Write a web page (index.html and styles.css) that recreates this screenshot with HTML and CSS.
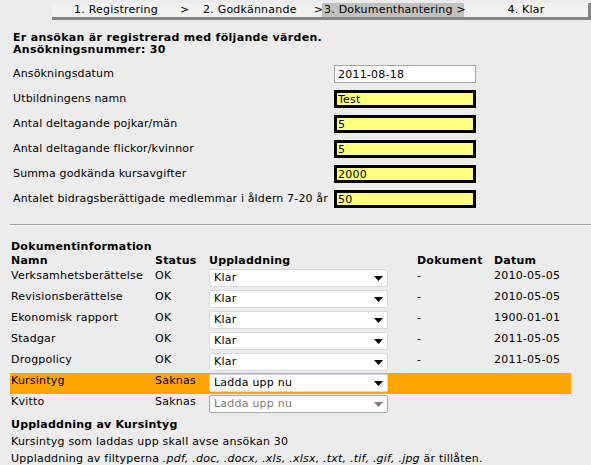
FILE: index.html
```html
<!DOCTYPE html>
<html lang="sv">
<head>
<meta charset="utf-8">
<title>Dokumenthantering</title>
<link rel="stylesheet" href="styles.css">
</head>
<body>
<div class="steps">
  <span class="step s1">1. Registrering</span>
  <span class="step sep1">&gt;</span>
  <span class="step s2">2. Godkännande</span>
  <span class="step sep2">&gt;</span>
  <span class="step s3 active">3. Dokumenthantering &gt;</span>
  <span class="step s4">4. Klar</span>
</div>

<div class="intro">
  <p>Er ansökan är registrerad med följande värden.</p>
  <p>Ansökningsnummer: 30</p>
</div>

<div class="form">
  <span class="lbl">Ansökningsdatum</span><input class="fld plain" value="2011-08-18">
  <span class="lbl">Utbildningens namn</span><input class="fld req" value="Test">
  <span class="lbl">Antal deltagande pojkar/män</span><input class="fld req" value="5">
  <span class="lbl">Antal deltagande flickor/kvinnor</span><input class="fld req" value="5">
  <span class="lbl">Summa godkända kursavgifter</span><input class="fld req" value="2000">
  <span class="lbl">Antalet bidragsberättigade medlemmar i åldern 7-20 år</span><input class="fld req" value="50">
</div>

<div class="rule"></div>

<div class="docs">
  <div class="docs-title">Dokumentinformation</div>
  <table class="doctable">
    <colgroup>
      <col class="c1"><col class="c2"><col class="c3"><col class="c4"><col class="c5">
    </colgroup>
    <thead>
      <tr><th>Namn</th><th>Status</th><th>Uppladdning</th><th>Dokument</th><th>Datum</th></tr>
    </thead>
    <tbody>
      <tr><td>Verksamhetsberättelse</td><td>OK</td><td><div class="sel"><span>Klar</span><svg class="arrow" width="9" height="5" viewBox="0 0 9 5"><path d="M0 0H9L4.5 5Z"/></svg></div></td><td>-</td><td>2010-05-05</td></tr>
      <tr><td>Revisionsberättelse</td><td>OK</td><td><div class="sel"><span>Klar</span><svg class="arrow" width="9" height="5" viewBox="0 0 9 5"><path d="M0 0H9L4.5 5Z"/></svg></div></td><td>-</td><td>2010-05-05</td></tr>
      <tr><td>Ekonomisk rapport</td><td>OK</td><td><div class="sel"><span>Klar</span><svg class="arrow" width="9" height="5" viewBox="0 0 9 5"><path d="M0 0H9L4.5 5Z"/></svg></div></td><td>-</td><td>1900-01-01</td></tr>
      <tr><td>Stadgar</td><td>OK</td><td><div class="sel"><span>Klar</span><svg class="arrow" width="9" height="5" viewBox="0 0 9 5"><path d="M0 0H9L4.5 5Z"/></svg></div></td><td>-</td><td>2011-05-05</td></tr>
      <tr><td>Drogpolicy</td><td>OK</td><td><div class="sel"><span>Klar</span><svg class="arrow" width="9" height="5" viewBox="0 0 9 5"><path d="M0 0H9L4.5 5Z"/></svg></div></td><td>-</td><td>2011-05-05</td></tr>
      <tr class="current"><td>Kursintyg</td><td>Saknas</td><td><div class="sel"><span>Ladda upp nu</span><svg class="arrow" width="9" height="5" viewBox="0 0 9 5"><path d="M0 0H9L4.5 5Z"/></svg></div></td><td></td><td></td></tr>
      <tr><td>Kvitto</td><td>Saknas</td><td><div class="sel disabled"><span>Ladda upp nu</span><svg class="arrow" width="9" height="5" viewBox="0 0 9 5"><path d="M0 0H9L4.5 5Z"/></svg></div></td><td></td><td></td></tr>
    </tbody>
  </table>

  <div class="upload">
    <div class="upload-title">Uppladdning av Kursintyg</div>
    <p>Kursintyg som laddas upp skall avse ansökan 30</p>
    <p>Uppladdning av filtyperna <i>.pdf, .doc, .docx, .xls, .xlsx, .txt, .tif, .gif, .jpg</i> är tillåten.</p>
  </div>
</div>
</body>
</html>
```

FILE: styles.css
```css
html, body {
  margin: 0;
  padding: 0;
}

body {
  background: #ececec;
  font-family: "DejaVu Sans", Verdana, sans-serif;
  font-size: 11px;
  letter-spacing: 0.22px;
  color: #000;
}

/* progress steps */
.steps {
  display: flex;
  margin: 3px 0 0 52px;
  width: 536px;
  height: 14px;
  line-height: 14px;
  background: #f2f2f2;
  border-right: 3px solid #858585;
  border-bottom: 3px solid #858585;
  white-space: nowrap;
}

.step {
  display: block;
  box-sizing: border-box;
}

.s1 { width: 126px; padding-left: 22px; }
.sep1 { width: 20px; padding-left: 2px; }
.s2 { width: 112px; padding-left: 5px; }
.sep2 { width: 12px; padding-left: 4px; }
.s3 { width: 142px; padding-left: 2px; }
.s4 { flex: 1; text-align: center; }

.active {
  background: #c0c0c0;
}

/* intro */
.intro {
  margin: 12px 0 0 13px;
  font-weight: bold;
  letter-spacing: 0.3px;
}

.intro p {
  margin: 0;
  line-height: 12px;
}

/* form */
.form {
  display: grid;
  grid-template-columns: 317px 142px;
  column-gap: 4px;
  row-gap: 7px;
  align-items: center;
  margin: 9px 0 0 13px;
}

.lbl {
  white-space: nowrap;
  line-height: 14px;
  letter-spacing: 0.15px;
}

.fld {
  box-sizing: border-box;
  width: 142px;
  height: 18px;
  margin: 0;
  font-family: inherit;
  font-size: 11px;
  letter-spacing: inherit;
  color: #000;
  outline: none;
}

.plain {
  background: #fff;
  border: 1px solid #a8a8a8;
  padding: 0 3px;
}

.req {
  background: #ffff80;
  border: 3px solid #000;
  padding: 0 1px;
}

/* separator */
.rule {
  margin: 16px 0 0 10px;
  height: 1px;
  background: #a0a0a0;
  border-bottom: 1px solid #f6f6f6;
}

/* documents */
.docs {
  margin-left: 10px;
}

.docs-title {
  margin-top: 14px;
  padding-left: 1px;
  font-weight: bold;
  line-height: 14px;
}

.doctable {
  width: 561px;
  border-collapse: collapse;
  table-layout: fixed;
}

.c1 { width: 144px; }
.c2 { width: 54px; }
.c3 { width: 208px; }
.c4 { width: 77px; }
.c5 { width: 78px; }

.doctable th,
.doctable td {
  padding: 0 0 0 1px;
  text-align: left;
  vertical-align: top;
  white-space: nowrap;
  line-height: 14px;
}

.doctable th {
  height: 14px;
  font-weight: bold;
}

.doctable tbody td {
  height: 21px;
  box-sizing: border-box;
  padding-top: 1px;
}

.doctable tr.current td {
  background: #ffa500;
}

.sel {
  box-sizing: border-box;
  width: 179px;
  height: 18px;
  display: flex;
  align-items: center;
  justify-content: space-between;
  padding: 0 3px 0 4px;
  background: #fff;
  border: 1px solid #dadada;
  border-radius: 2px;
  line-height: 16px;
}

.sel .arrow {
  fill: #000;
  margin-right: 1px;
}

.sel.disabled {
  border-color: #ababab;
  color: #7a7a7a;
}

.sel.disabled .arrow {
  fill: #7a7a7a;
}

/* upload info */
.upload {
  padding-left: 1px;
  margin-top: 3px;
}

.upload-title {
  font-weight: bold;
  line-height: 14px;
}

.upload p {
  margin: 3px 0 0;
  line-height: 14px;
}
```
